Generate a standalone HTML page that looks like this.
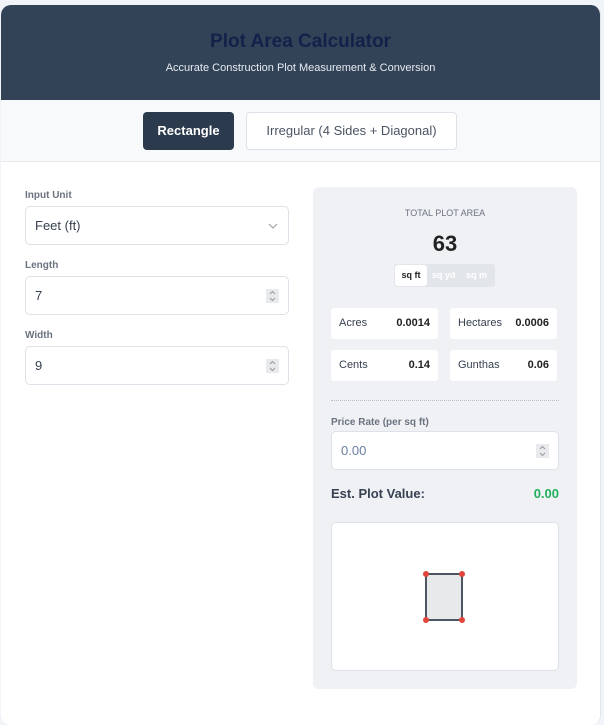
<!DOCTYPE html>
<html><head><meta charset="utf-8"><style>
*{box-sizing:border-box;margin:0;padding:0}
body{width:604px;height:712px;background:#f1f4f8;font-family:"Liberation Sans",sans-serif;overflow:hidden;position:relative}
.card{position:absolute;left:1px;top:5px;width:600px;height:720px;background:#fff;border-radius:10px;border-right:1px solid #e2e6ea;overflow:hidden}
.hdr{height:95px;background:#334357;text-align:center}
.hdr h1{padding-top:26px;font-size:19px;color:#13214a;font-weight:bold;line-height:22px}
.hdr p{margin-top:9px;font-size:11px;color:#e6ebf2}
.tabs{height:62px;background:#f7f9fb;border-bottom:1px solid #e5e8ec;position:relative}
.tab{position:absolute;top:12px;height:38px;border-radius:4px;font-size:13px;line-height:38px;text-align:center}
.t1{left:142px;width:91px;background:#2c3a4d;color:#fff;font-weight:bold}
.t2{left:245px;width:211px;background:#fff;border:1px solid #dde2e8;color:#4b5563;line-height:36px}
.lbl{position:absolute;left:24px;font-size:10px;color:#6b7280;font-weight:bold}
.inp{position:absolute;left:24px;width:264px;height:39px;border:1px solid #dde2e8;border-radius:5px;font-size:13px;color:#374151;padding:11px 9px;background:#fff}
.spin{position:absolute;right:9px;top:12px;width:13px;height:14px;background:#e8eaed}
.rp{position:absolute;left:312px;top:182px;width:264px;height:502px;background:#eff1f5;border-radius:6px}
.box{position:absolute;width:107px;height:31px;background:#fff;border-radius:3px;font-size:11px;color:#374151;padding:9px 8px}
.box b{float:right;color:#222;font-size:11px}
</style></head><body>
<div class="card">
<div class="hdr"><h1>Plot Area Calculator</h1><p>Accurate Construction Plot Measurement &amp; Conversion</p></div>
<div class="tabs"><div class="tab t1">Rectangle</div><div class="tab t2">Irregular (4 Sides + Diagonal)</div></div>
<div class="lbl" style="top:185px">Input Unit</div>
<div class="inp" style="top:201px">Feet (ft)<svg style="position:absolute;right:10px;top:16px" width="10" height="6"><path d="M1 1L5 5L9 1" stroke="#999" fill="none"/></svg></div>
<div class="lbl" style="top:255px">Length</div>
<div class="inp" style="top:271px">7<svg class="spin" viewBox="0 0 13 14"><path d="M4 5L6.5 2.5L9 5M4 9L6.5 11.5L9 9" stroke="#999" fill="none"/></svg></div>
<div class="lbl" style="top:325px">Width</div>
<div class="inp" style="top:341px">9<svg class="spin" viewBox="0 0 13 14"><path d="M4 5L6.5 2.5L9 5M4 9L6.5 11.5L9 9" stroke="#999" fill="none"/></svg></div>
<div class="rp">
<div style="position:absolute;top:21px;width:100%;text-align:center;font-size:9px;color:#6b7280">TOTAL PLOT AREA</div>
<div style="position:absolute;top:44px;width:100%;text-align:center;font-size:22px;font-weight:bold;color:#222">63</div>
<div style="position:absolute;left:81px;top:77px;width:101px;height:23px;background:#e2e5e9;border-radius:3px;font-size:9px;font-weight:bold;color:#fff">
<span style="position:absolute;left:1px;top:1px;width:32px;height:21px;background:#fff;border-radius:3px;color:#222;text-align:center;line-height:21px">sq ft</span>
<span style="position:absolute;left:38px;top:6px">sq yd</span><span style="position:absolute;left:72px;top:6px">sq m</span></div>
<div class="box" style="left:18px;top:121px">Acres<b>0.0014</b></div>
<div class="box" style="left:137px;top:121px">Hectares<b>0.0006</b></div>
<div class="box" style="left:18px;top:163px">Cents<b>0.14</b></div>
<div class="box" style="left:137px;top:163px">Gunthas<b>0.06</b></div>
<div style="position:absolute;left:18px;top:213px;width:228px;border-top:1px dotted #b8bec7"></div>
<div style="position:absolute;left:18px;top:230px;font-size:10px;color:#6b7280;font-weight:bold">Price Rate (per sq ft)</div>
<div class="inp" style="left:18px;top:244px;width:228px;color:#6b7fa0">0.00<svg class="spin" viewBox="0 0 13 14"><path d="M4 5L6.5 2.5L9 5M4 9L6.5 11.5L9 9" stroke="#999" fill="none"/></svg></div>
<div style="position:absolute;left:18px;top:299px;font-size:13px;font-weight:bold;color:#374151">Est. Plot Value:</div>
<div style="position:absolute;right:18px;top:299px;font-size:13px;font-weight:bold;color:#22b05a">0.00</div>
<div style="position:absolute;left:18px;top:335px;width:228px;height:149px;background:#fff;border:1px solid #dde2e8;border-radius:5px">
<svg width="228" height="149" style="position:absolute;left:-1px;top:-1px"><rect x="95" y="52" width="36" height="46" fill="#e8e9eb" stroke="#4b5563" stroke-width="2"/><circle cx="95" cy="52" r="3" fill="#e0443a"/><circle cx="131" cy="52" r="3" fill="#e0443a"/><circle cx="95" cy="98" r="3" fill="#e0443a"/><circle cx="131" cy="98" r="3" fill="#e0443a"/></svg>
</div>
</div>
</div>
</body></html>
